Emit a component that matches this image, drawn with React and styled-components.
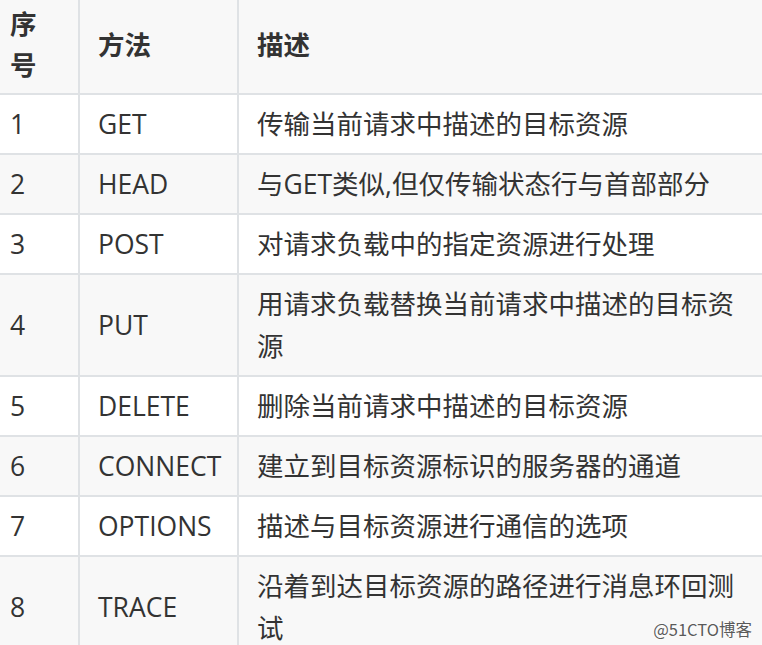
import React from "react";
import styled, { createGlobalStyle } from "styled-components";

const Global = createGlobalStyle`
  html, body {
    margin: 0;
    padding: 0;
    background: #ffffff;
    overflow: hidden;
  }
  body {
    font-family: "Open Sans", "Noto Sans CJK SC", sans-serif;
    color: #333333;
  }
`;

const Page = styled.div`
  position: relative;
  width: 762px;
  height: 645px;
  overflow: hidden;
  background: #ffffff;
`;

const Table = styled.table`
  border-collapse: separate;
  border-spacing: 0;
  table-layout: fixed;
  width: 765px;
  font-family: "Open Sans", "Noto Sans CJK SC", sans-serif;
  font-size: 26.5px;
  color: #333333;
`;

const Col = styled.col`
  width: ${(p) => p.$w}px;
`;

const HeadRow = styled.tr`
  background: #f8f8f8;
`;

const Row = styled.tr`
  background: ${(p) => (p.$shaded ? "#f8f8f8" : "#ffffff")};
`;

const Th = styled.th`
  text-align: left;
  font-weight: 700;
  line-height: 41px;
  padding: 4px 18px 7px ${(p) => (p.$first ? "10px" : "18px")};
  border-right: 2px solid #dfe2e5;
  border-bottom: 2px solid #dfe2e5;
  vertical-align: middle;
`;

const Td = styled.td`
  line-height: 42px;
  padding: 8px 18px 8px ${(p) => (p.$first ? "10px" : "18px")};
  border-right: 2px solid #dfe2e5;
  border-bottom: 2px solid #dfe2e5;
  vertical-align: middle;
  white-space: ${(p) => (p.$nowrap ? "nowrap" : "normal")};
`;

const Watermark = styled.div`
  position: absolute;
  right: 10px;
  bottom: 7px;
  font-family: "Noto Sans CJK SC", "Open Sans", sans-serif;
  font-size: 16.5px;
  line-height: 18px;
  color: #5a5a5a;
  text-shadow: 0 0 2px #ffffff, 0 0 2px #ffffff;
`;

const rows = [
  ["1", "GET", "传输当前请求中描述的目标资源"],
  ["2", "HEAD", "与GET类似,但仅传输状态行与首部部分"],
  ["3", "POST", "对请求负载中的指定资源进行处理"],
  ["4", "PUT", "用请求负载替换当前请求中描述的目标资源"],
  ["5", "DELETE", "删除当前请求中描述的目标资源"],
  ["6", "CONNECT", "建立到目标资源标识的服务器的通道"],
  ["7", "OPTIONS", "描述与目标资源进行通信的选项"],
  ["8", "TRACE", "沿着到达目标资源的路径进行消息环回测试"],
];

export default function App() {
  return (
    <>
      <Global />
      <Page>
        <Table>
          <colgroup>
            <Col $w={80} />
            <Col $w={159} />
            <Col $w={526} />
          </colgroup>
          <thead>
            <HeadRow>
              <Th $first>序号</Th>
              <Th>方法</Th>
              <Th>描述</Th>
            </HeadRow>
          </thead>
          <tbody>
            {rows.map((r, i) => (
              <Row key={r[0]} $shaded={i % 2 === 1}>
                <Td $first>{r[0]}</Td>
                <Td $nowrap>{r[1]}</Td>
                <Td>{r[2]}</Td>
              </Row>
            ))}
          </tbody>
        </Table>
        <Watermark>@51CTO博客</Watermark>
      </Page>
    </>
  );
}
